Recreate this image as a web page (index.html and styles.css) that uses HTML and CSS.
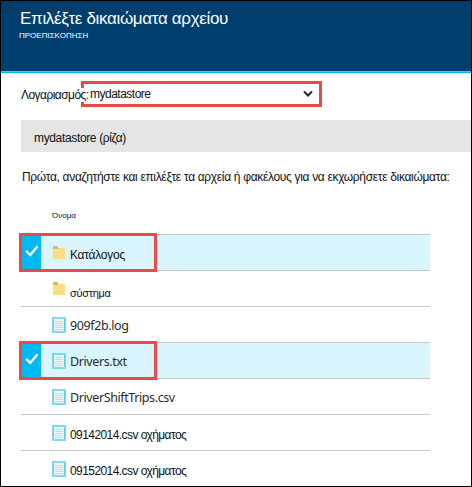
FILE: index.html
```html
<!DOCTYPE html>
<html lang="el">
<head>
<meta charset="utf-8">
<title>Επιλέξτε δικαιώματα αρχείου</title>
<link rel="stylesheet" href="styles.css">
</head>
<body>
<svg width="0" height="0" class="defs">
  <symbol id="folder" viewBox="0 0 12 14">
    <path d="M0 0h5v2h7v11H0z" fill="#dcb968"/>
    <path d="M0 3h5l1-1h6V13H0z" fill="#fddc87"/>
  </symbol>
  <symbol id="file" viewBox="0 0 14 16">
    <path d="M1 1h12v14H1z" fill="#eefafe" stroke="#7fd9f5" stroke-width="2"/>
    <path d="M1.5 2v12M12.5 2v12" stroke="#5bcbef" stroke-width="1"/>
    <path d="M3 4.5h8M3 6.5h8M3 8.5h8M3 10.5h8M3 12.5h8" stroke="#a3e3f8"/>
  </symbol>
  <symbol id="check" viewBox="0 0 14 12">
    <path d="M1.2 5.8l4 4.2L12.6 1.3" fill="none" stroke="#fff" stroke-width="2.4"/>
  </symbol>
</svg>
<div class="blade">
  <header class="header">
    <h1 class="title">Επιλέξτε δικαιώματα αρχείου</h1>
    <div class="preview">ΠΡΟΕΠΙΣΚΟΠΗΣΗ</div>
  </header>
  <div class="account">
    <div class="select">
      <span class="value">mydatastore</span>
      <svg class="chevron" width="10" height="8" viewBox="0 0 10 8"><path d="M1 1.5l4 4 4-4" fill="none" stroke="#23272e" stroke-width="2"/></svg>
    </div>
    <label class="label">Λογαριασμός:</label>
  </div>
  <div class="crumb"><span>mydatastore (ρίζα)</span></div>
  <p class="hint">Πρώτα, αναζητήστε και επιλέξτε τα αρχεία ή φακέλους για να εκχωρήσετε δικαιώματα:</p>
  <div class="column">Όνομα</div>
  <ul class="list">
    <li class="row selected"><span class="tick"><svg width="14" height="12"><use href="#check"/></svg></span><svg class="icon folder" width="12" height="14"><use href="#folder"/></svg><span class="name catalog">Κατάλογος</span></li>
    <li class="row"><svg class="icon folder" width="12" height="14"><use href="#folder"/></svg><span class="name system">σύστημα</span></li>
    <li class="row"><svg class="icon" width="14" height="16"><use href="#file"/></svg><span class="name latin">909f2b.log</span></li>
    <li class="row selected"><span class="tick"><svg width="14" height="12"><use href="#check"/></svg></span><svg class="icon" width="14" height="16"><use href="#file"/></svg><span class="name latin">Drivers.txt</span></li>
    <li class="row"><svg class="icon" width="14" height="16"><use href="#file"/></svg><span class="name latin">DriverShiftTrips.csv</span></li>
    <li class="row"><svg class="icon" width="14" height="16"><use href="#file"/></svg><span class="name vehicle">09142014.csv οχήματος</span></li>
    <li class="row"><svg class="icon" width="14" height="16"><use href="#file"/></svg><span class="name vehicle">09152014.csv οχήματος</span></li>
  </ul>
</div>
</body>
</html>
```

FILE: styles.css
```css
*, *::after { box-sizing: border-box; }
body { margin: 0; }
.defs { position: absolute; }
.blade {
  width: 472px;
  height: 487px;
  border: 1px solid #000;
  background: #fff;
  overflow: hidden;
  font: 12px/16px "Liberation Sans", Arial, sans-serif;
  color: #111;
  white-space: nowrap;
}
.header {
  height: 72px;
  padding: 7px 0 0 18px;
  background: #003e6e;
  border-bottom: 1px solid #00b9f2;
  box-shadow: inset 0 -1px #7fb4cc, 0 1px #d9f5fe;
  color: #fff;
}
.title { margin: 0 0 0 1px; font-size: 17px; line-height: 22px; font-weight: 400; letter-spacing: -0.34px; }
.preview { font-size: 8px; line-height: 11px; }
.account { position: relative; height: 47px; padding: 8px 0 0 80px; }
.label { position: absolute; left: 20px; top: 15px; background: #fff; line-height: 14px; letter-spacing: -0.55px; }
.select {
  display: flex;
  align-items: center;
  justify-content: space-between;
  width: 241px;
  height: 26px;
  padding: 0 6px;
  border: 3px solid #e84b45;
}
.value { letter-spacing: -0.5px; }
.crumb { height: 32px; margin-left: 20px; padding: 10px 13px; background: #e5e5e5; letter-spacing: -0.35px; }
.hint { margin: 17px 0 0 21px; letter-spacing: -0.325px; }
.column { margin: 25px 0 0 51px; font-size: 8px; line-height: 12px; }
.list { width: 409px; margin: 12px 0 0 20px; padding: 0; list-style: none; }
.row {
  position: relative;
  display: flex;
  align-items: center;
  height: 36px;
  padding: 4px 0 0 31px;
  border-top: 1px solid #c8c8c8;
}
.selected { background: #d9f5fe; }
.selected::after {
  content: "";
  position: absolute;
  left: -2px;
  top: -2px;
  width: 138px;
  height: 39px;
  border: 3px solid #e84b45;
  z-index: 1;
}
.tick {
  position: absolute;
  left: 0;
  top: 0;
  width: 20px;
  height: 35px;
  padding: 10px 0 0 4px;
  background: #00b9f2;
}
.tick svg { display: block; }
.icon { flex: none; margin: -4px 4px 0 0; }
.folder { margin: -4px 5px 0 1px; }
.catalog { letter-spacing: -0.25px; }
.system { padding-top: 4px; font-size: 11px; letter-spacing: -0.3px; }
.latin { margin-top: -2px; font: 12.5px/16px "Noto Sans", sans-serif; color: #2c2c2c; letter-spacing: -0.4px; }
.vehicle { letter-spacing: -0.57px; }
```
